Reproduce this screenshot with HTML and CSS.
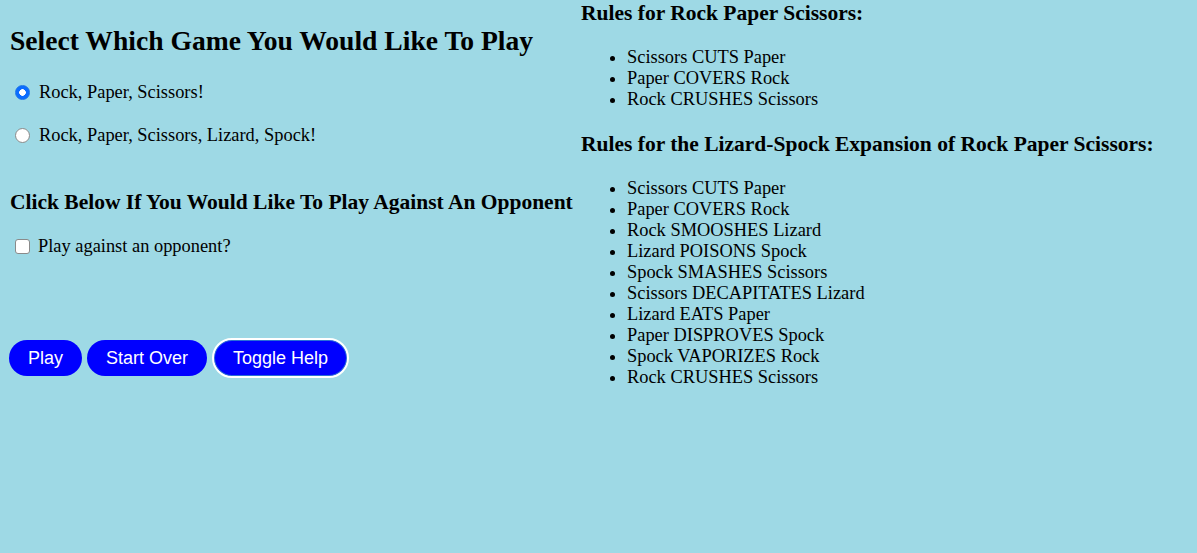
FILE: index.html
```html
<!DOCTYPE html>
<html>
<head>
<meta charset="utf-8">
<link rel="stylesheet" href="styles.css">
</head>
<body>
<div class="page">
  <div class="left">
    <h2 class="title">Select Which Game You Would Like To Play</h2>
    <label class="opt"><input type="radio" name="game" class="radio" checked> Rock, Paper, Scissors!</label>
    <label class="opt"><input type="radio" name="game" class="radio"> Rock, Paper, Scissors, Lizard, Spock!</label>
    <h3 class="sub">Click Below If You Would Like To Play Against An Opponent</h3>
    <label class="chk"><input type="checkbox" class="box"> Play against an opponent?</label>
    <div class="buttons">
      <button class="btn">Play</button>
      <button class="btn">Start Over</button>
      <button class="btn focus">Toggle Help</button>
    </div>
  </div>
  <div class="right">
    <h3 class="rules-h">Rules for Rock Paper Scissors:</h3>
    <ul class="rules">
      <li>Scissors CUTS Paper</li>
      <li>Paper COVERS Rock</li>
      <li>Rock CRUSHES Scissors</li>
    </ul>
    <h3 class="rules-h">Rules for the Lizard-Spock Expansion of Rock Paper Scissors:</h3>
    <ul class="rules">
      <li>Scissors CUTS Paper</li>
      <li>Paper COVERS Rock</li>
      <li>Rock SMOOSHES Lizard</li>
      <li>Lizard POISONS Spock</li>
      <li>Spock SMASHES Scissors</li>
      <li>Scissors DECAPITATES Lizard</li>
      <li>Lizard EATS Paper</li>
      <li>Paper DISPROVES Spock</li>
      <li>Spock VAPORIZES Rock</li>
      <li>Rock CRUSHES Scissors</li>
    </ul>
  </div>
</div>
</body>
</html>
```
FILE: styles.css
```css
html, body {
  margin: 0;
  padding: 0;
  background: #9ed9e5;
  height: 100%;
}
body {
  font-family: "Liberation Serif", "Times New Roman", serif;
  color: #000;
  font-size: 18.4px;
}
.page {
  display: flex;
  padding: 0 10px;
}
.left {
  width: 571px;
  flex: none;
  padding-top: 25px;
}
.right {
  flex: 1;
}
.title {
  font-size: 27.6px;
  font-weight: bold;
  margin: 0 0 25px;
}
.opt {
  display: flex;
  align-items: center;
  height: 21px;
  margin-bottom: 22px;
}
.radio, .box {
  appearance: none;
  -webkit-appearance: none;
  margin: 0 9px 0 5px;
  width: 15px;
  height: 15px;
  flex: none;
}
.radio {
  border-radius: 50%;
  background: #fff;
  border: 1px solid #8a8a8a;
}
.radio:checked {
  border: 1px solid #1a73e8;
  background: radial-gradient(circle, #fff 0 3px, #0b6cff 3.6px);
}
.sub {
  font-size: 21.5px;
  font-weight: bold;
  margin: 44px 0 21px;
}
.chk {
  display: flex;
  align-items: center;
  height: 21px;
}
.box {
  border: 1px solid #8a8a8a;
  border-radius: 3px;
  background: #fff;
  margin-right: 8px;
}
.buttons {
  display: flex;
  gap: 5px;
  margin-top: 83px;
  margin-left: -1px;
}
.btn {
  font-family: "Liberation Sans", Arial, sans-serif;
  font-size: 18px;
  color: #fff;
  background: #0000ff;
  border: 0;
  border-radius: 18px;
  height: 36px;
  padding: 0 19px;
}
.btn.focus {
  outline: 2px solid #fff;
  outline-offset: 0;
  box-shadow: inset 0 0 0 1px #2a6fd6;
  margin-left: 2px;
}
.rules-h {
  font-size: 21.5px;
  font-weight: bold;
  margin: 0;
  line-height: 26px;
}
.rules {
  margin: 21px 0 21px;
  padding-left: 46px;
}
.rules li {
  line-height: 21px;
}
```
